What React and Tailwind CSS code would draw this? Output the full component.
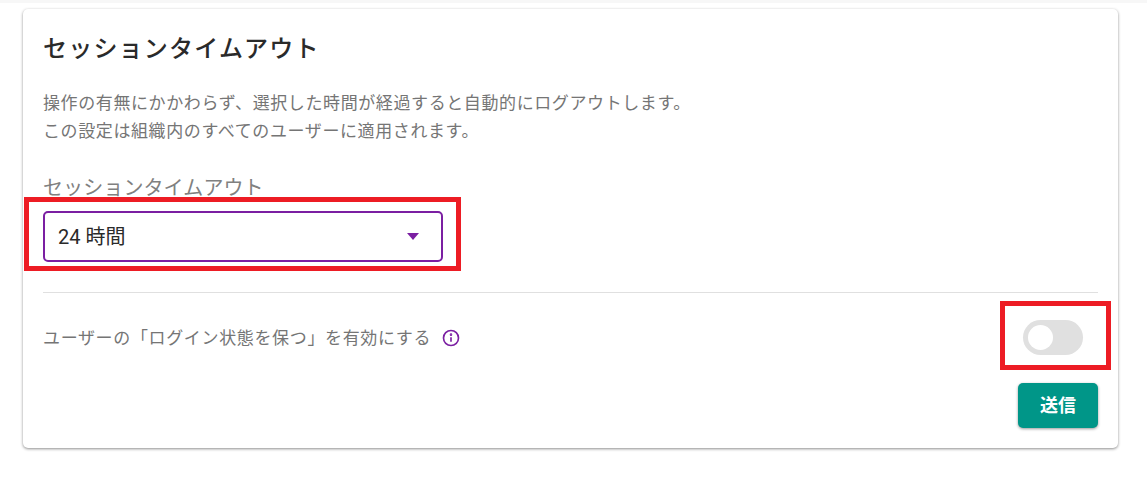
const fontStack = "font-['Roboto','Noto_Sans_CJK_JP',sans-serif]";

// Red annotation rectangle drawn over the screenshot
function Marker({ className }) {
  return <div className={`absolute border-[5px] border-[#ed1c24] ${className}`} />;
}

export default function App() {
  return (
    <div className={`relative min-h-[486px] bg-white pt-[9px] px-[23px] ${fontStack}`}>
      <div className="absolute top-0 left-0 right-0 h-[3px] bg-[#f7f7f7]" />
      <div className="relative w-[1095px] h-[439px] bg-white rounded-[5px] shadow-[0_1px_3px_rgba(0,0,0,0.45)] pt-[22px] px-[20px]">
        <h2 className="text-[24px] leading-[36px] font-medium tracking-[1.2px] text-[#2a2a2a]">
          セッションタイムアウト
        </h2>
        <div className="mt-[22px] text-[17px] leading-[28px] tracking-[0.6px] text-[#757575]">
          <p>操作の有無にかかわらず、選択した時間が経過すると自動的にログアウトします。</p>
          <p>この設定は組織内のすべてのユーザーに適用されます。</p>
        </div>
        <div className="mt-[29px] text-[20px] leading-[28px] tracking-[0.1px] text-[#808080]">セッションタイムアウト</div>
        <div className="mt-[9px] w-[400px] h-[51px] border-2 border-[#7b1fa2] rounded-[5px] flex items-center justify-between pl-[13px] pr-[22px]">
          <span className="pt-px text-[20px] text-[#2a2a2a]">24 時間</span>
          <span className="w-0 h-0 border-x-[6px] border-x-transparent border-t-[7px] border-t-[#7b1fa2]" />
        </div>
        <div className="mt-[30px] h-px bg-[#e0e0e0]" />
        <div className="mt-[27px] flex items-start justify-between pr-[15px]">
          <div className="flex items-center gap-[11px] pt-[3px]">
            <span className="text-[17px] leading-[30px] tracking-[0.65px] text-[#757575]">
              ユーザーの「ログイン状態を保つ」を有効にする
            </span>
            <svg width="18" height="18" viewBox="0 0 24 24" fill="none" stroke="#7b1fa2" strokeWidth="2.2">
              <circle cx="12" cy="12" r="10" />
              <path d="M12 11v6" />
              <circle cx="12" cy="7.5" r="0.6" fill="#7b1fa2" />
            </svg>
          </div>
          <div className="flex items-center w-[60px] h-[35px] rounded-full bg-[#e0e0e0] pl-[5px]">
            <span className="w-[25px] h-[25px] rounded-full bg-white" />
          </div>
        </div>
        <div className="mt-[28px] flex justify-end">
          <button className="w-[80px] h-[45px] rounded-[5px] bg-[#009688] text-white font-bold text-[18px] shadow-[0_1px_3px_rgba(0,0,0,0.4)]">
            送信
          </button>
        </div>
      </div>
      <Marker className="left-[24px] top-[197px] w-[437px] h-[74px]" />
      <Marker className="left-[1000px] top-[301px] w-[111px] h-[69px]" />
    </div>
  );
}
